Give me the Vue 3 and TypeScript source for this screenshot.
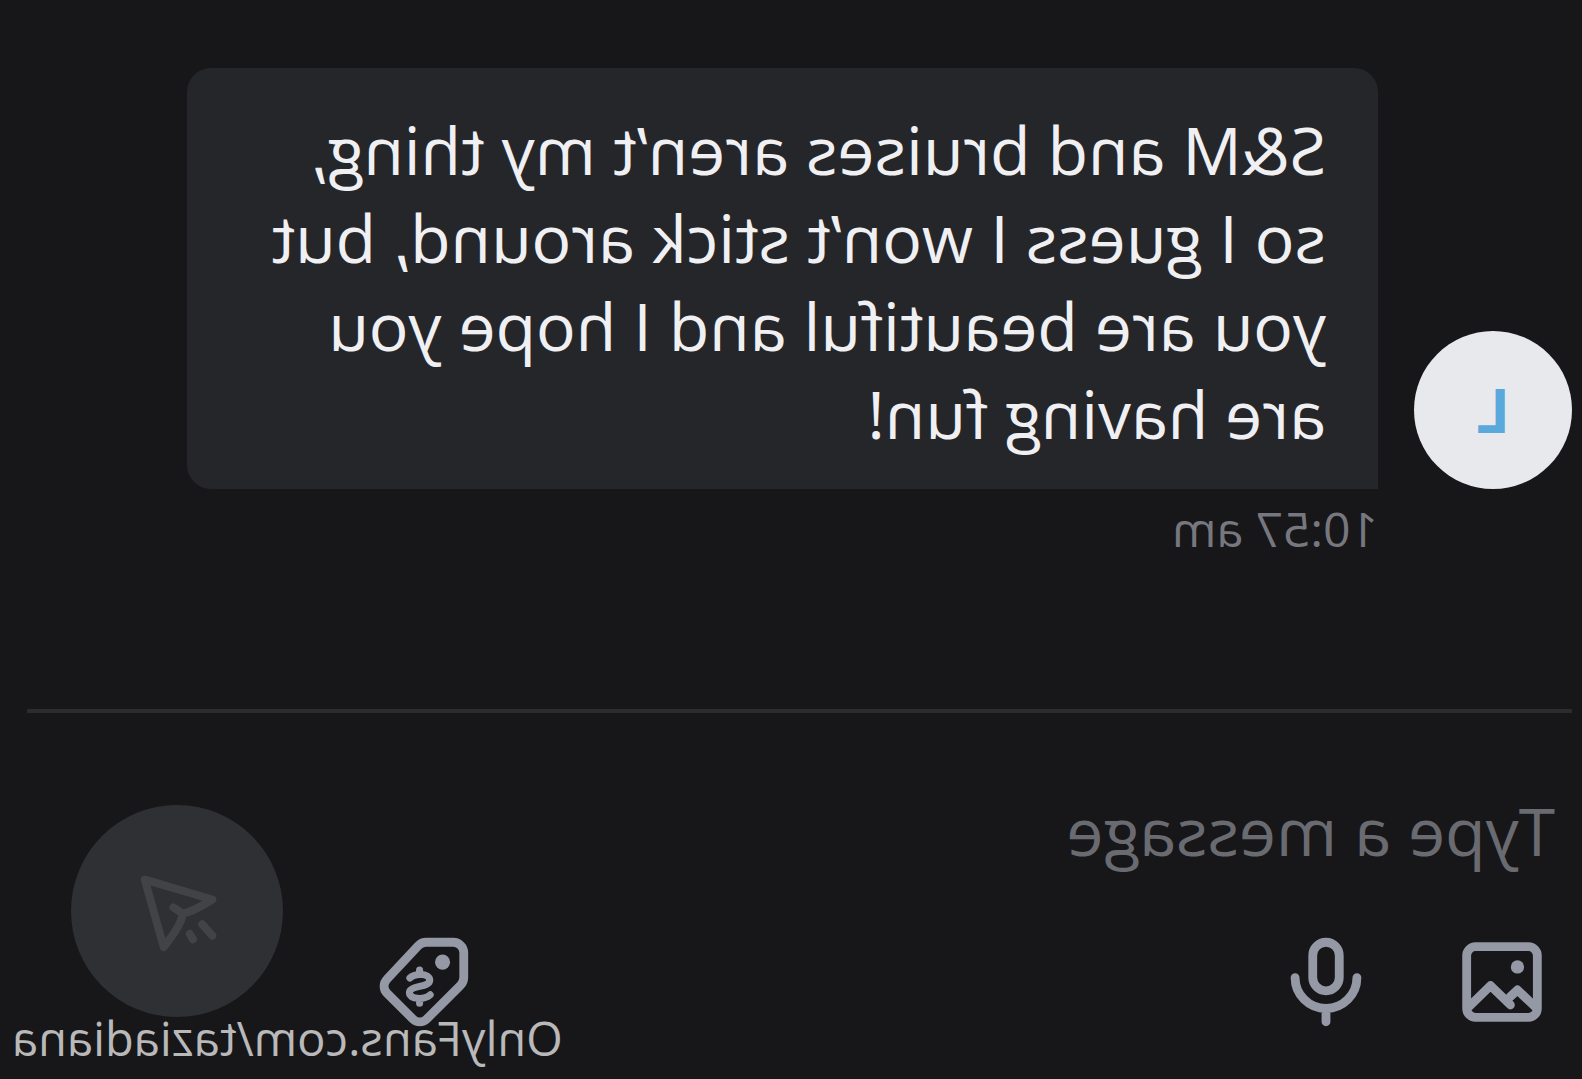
<script setup lang="ts">
import { ref } from 'vue'

interface Message {
  initial: string
  text: string
  time: string
}

const messages: Message[] = [
  {
    initial: 'L',
    text: 'S&M and bruises aren’t my thing,\nso I guess I won’t stick around, but\nyou are beautiful and I hope you\nare having fun!',
    time: '10:57 am',
  },
]
const draft = ref('')
</script>

<template>
  <main class="chat">
    <section v-for="m in messages" :key="m.time" class="message">
      <div class="avatar">{{ m.initial }}</div>
      <p class="bubble">{{ m.text }}</p>
      <time class="time">{{ m.time }}</time>
    </section>

    <form class="composer" @submit.prevent>
      <div class="entry">
        <input v-model="draft" class="field" type="text" placeholder="Type a message" aria-label="Type a message" />
        <div class="tools">
          <button type="button" class="tool" aria-label="Add image">
            <svg class="icon" viewBox="0 0 24 24">
              <rect x="4" y="4" width="16" height="16" rx="2" />
              <circle class="solid" cx="8.5" cy="8.6" r="1.5" />
              <path d="M4.3 17.8 8.5 13.8 10.2 15.4M10.1 17.2 14.6 12.8 19.7 17.8" />
            </svg>
          </button>
          <button type="button" class="tool" aria-label="Record voice">
            <svg class="icon" viewBox="0 0 24 24">
              <rect x="9" y="3" width="6" height="11" rx="3" />
              <path d="M5 11a7 7 0 0 0 14 0M12 18v3" />
            </svg>
          </button>
          <button type="button" class="tool price" aria-label="Set price">
            <svg class="icon" viewBox="0 0 24 24">
              <path d="M3 5.4A2.4 2.4 0 0 1 5.4 3h6.1a2.4 2.4 0 0 1 1.7.7l7.2 7.7a2.2 2.2 0 0 1 0 3.1l-5.9 5.9a2.2 2.2 0 0 1-3.1 0l-7.6-7.6A2.6 2.6 0 0 1 3 11z" />
              <circle class="solid" cx="7.8" cy="7.5" r="1.7" />
              <path class="dollar" d="M15.2 11.1C14 9.9 10.7 10 10.7 11.6 10.7 13.3 15.3 12.7 15.3 14.4 15.3 16 12 16.1 10.6 14.9M13 9.3V10M13 16v.8" />
            </svg>
          </button>
        </div>
      </div>
      <button type="submit" class="send" aria-label="Send">
        <svg class="icon thin" viewBox="0 0 24 24">
          <path d="M19.3 4.9 4 9.4C6 10.6 8.4 12.2 10.7 12.6 11 15 13.2 17.8 15 20.2zM10.7 12.6 12.8 11.2M6.3 15 4 17.6M9.1 17.2 8.4 18.4" />
        </svg>
      </button>
    </form>

    <p class="watermark">OnlyFans.com/taziadiana</p>
  </main>
</template>

<style>
body {
  margin: 0;
  background: #17171a;
}
</style>

<style scoped>
/* The whole conversation is displayed as a mirror image. */
.chat {
  position: relative;
  box-sizing: border-box;
  min-height: 100vh;
  padding: 68px 27px 40px 10px;
  background: #17171a;
  color: #f0f0f3;
  font-family: "Open Sans", "Noto Sans", sans-serif;
  transform: scaleX(-1);
}

.message {
  display: grid;
  grid-template-columns: 158px 1fr;
  column-gap: 36px;
  align-items: end;
  padding-right: 160px;
}

.avatar {
  height: 158px;
  border-radius: 50%;
  background: #e8e9ed;
  color: #5aa9dc;
  font-size: 60px;
  font-weight: 700;
  line-height: 158px;
  text-align: center;
}

.bubble {
  margin: 0;
  padding: 37px 52px 32px;
  border-radius: 24px 24px 24px 0;
  background: #25262a;
  font-size: 66px;
  line-height: 88px;
  white-space: pre-line;
}

.time {
  grid-column: 2;
  margin-top: 8px;
  color: #77787f;
  font-size: 48px;
  line-height: 64px;
}

.composer {
  display: flex;
  align-items: center;
  gap: 88px;
  margin-top: 148px;
  padding: 73px 44px 0 17px;
  border-top: 4px solid #2c2c2f;
}

.entry {
  flex: 1;
  min-width: 0;
}

.field {
  display: block;
  box-sizing: border-box;
  width: 100%;
  height: 88px;
  padding: 0;
  border: 0;
  outline: 0;
  background: transparent;
  color: #f0f0f3;
  font: inherit;
  font-size: 66px;
}

.field::placeholder {
  color: #6a6b71;
  opacity: 1;
}

.tools {
  display: flex;
  gap: 70px;
  margin-top: 55px;
}

.tool,
.send {
  display: grid;
  place-items: center;
  padding: 0;
  border: 0;
  background: none;
  color: #9599a5;
}

.price {
  margin-left: auto;
}

.send {
  width: 212px;
  height: 212px;
  border-radius: 50%;
  background: #2f3034;
  color: #424347;
}

.icon {
  display: block;
  width: 106px;
  height: 106px;
  fill: none;
  stroke: currentColor;
  stroke-width: 2;
  stroke-linecap: round;
  stroke-linejoin: round;
}

.thin {
  stroke-width: 1.8;
}

.dollar {
  stroke-width: 1.6;
}

.solid {
  fill: currentColor;
  stroke: none;
}

.watermark {
  position: absolute;
  right: 12px;
  bottom: 9px;
  margin: 0;
  color: #b9b9ba;
  font-size: 47px;
  line-height: 64px;
}
</style>
